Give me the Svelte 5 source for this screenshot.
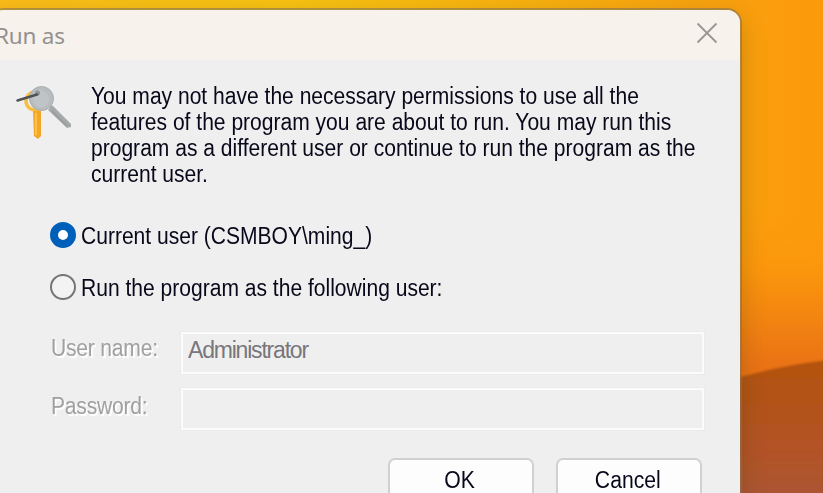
<script lang="ts">
  const message = [
    "You may not have the necessary permissions to use all the",
    "features of the program you are about to run. You may run this",
    "program as a different user or continue to run the program as the",
    "current user.",
  ];

  let runAs = $state("current");
  let userName = $state("Administrator");
  let password = $state("");
</script>

<div class="desktop">
  <svg class="wallpaper" viewBox="0 0 823 493" aria-hidden="true">
    <defs>
      <linearGradient id="sky" x1="0" y1="0" x2="1" y2="0">
        <stop offset="0" stop-color="#fabc18" />
        <stop offset="0.35" stop-color="#f8c312" />
        <stop offset="0.6" stop-color="#f8b40f" />
        <stop offset="0.85" stop-color="#f9a30f" />
        <stop offset="1" stop-color="#fc9a0b" />
      </linearGradient>
      <linearGradient id="glow" x1="0" y1="0" x2="0" y2="1">
        <stop offset="0.4" stop-color="#fd9d0b" stop-opacity="0" />
        <stop offset="0.55" stop-color="#fb960c" />
        <stop offset="0.74" stop-color="#ea7315" />
      </linearGradient>
      <linearGradient id="dune" x1="0" y1="0" x2="0" y2="1">
        <stop offset="0" stop-color="#b3520c" />
        <stop offset="0.6" stop-color="#b35327" />
        <stop offset="1" stop-color="#ab5635" />
      </linearGradient>
      <filter id="soft"><feGaussianBlur stdDeviation="1.3" /></filter>
    </defs>
    <rect width="823" height="493" fill="url(#sky)" />
    <rect width="823" height="493" fill="url(#glow)" />
    <path
      d="M700 388 L740 377 Q785 365 830 360 V505 H700 Z"
      fill="url(#dune)"
      filter="url(#soft)"
    />
  </svg>

  <div class="dialog">
    <header class="titlebar">
      <span class="title">Run as</span>
      <button class="close" aria-label="Close">
        <svg width="22" height="22" viewBox="0 0 22 22">
          <path d="M1.5 1.5 L20.5 20.5 M20.5 1.5 L1.5 20.5" />
        </svg>
      </button>
    </header>

    <div class="content">
      <div class="intro">
        <svg class="keys" width="56" height="58" viewBox="0 0 56 58">
          <circle cx="19" cy="15" r="9" fill="none" stroke="#f8bd3e" stroke-width="3.5" />
          <path d="M17 25 H25 V50 L22 53 L18 50 Z" fill="#f5a623" />
          <path d="M20 27 V49" stroke="#ffc04f" stroke-width="2" />
          <path d="M32 24 L36 19 L55 38 V41 L51 42 Z" fill="#a6a9aa" />
          <path d="M36 25 L51 40" stroke="#969a9b" stroke-width="1.5" />
          <circle cx="25.5" cy="12.5" r="12" fill="#b7bdbf" stroke="#a7acae" stroke-width="1" />
          <ellipse cx="25" cy="13" rx="8" ry="9" fill="#bfc5c7" />
          <circle cx="21.5" cy="7" r="2.5" fill="#8f9495" />
          <path d="M1.5 14.5 L21 8.5" stroke="#515354" stroke-width="2.5" stroke-linecap="round" />
        </svg>
        <p class="message">
          {#each message as line}
            <span class="line narrow">{line}</span>
          {/each}
        </p>
      </div>

      <label class="choice">
        <input type="radio" value="current" bind:group={runAs} />
        <span class="narrow">Current user (CSMBOY\ming_)</span>
      </label>
      <label class="choice">
        <input type="radio" value="other" bind:group={runAs} />
        <span class="narrow">Run the program as the following user:</span>
      </label>

      <div class="fields">
        <label class="field-label narrow" for="user">User name:</label>
        <input id="user" class="field" bind:value={userName} disabled={runAs === "current"} />
        <label class="field-label password narrow" for="pass">Password:</label>
        <input
          id="pass"
          class="field"
          type="password"
          bind:value={password}
          disabled={runAs === "current"}
        />
      </div>

      <div class="actions">
        <button class="btn"><span class="btn-text">OK</span></button>
        <button class="btn"><span class="btn-text">Cancel</span></button>
      </div>
    </div>
  </div>
</div>

<style>
  :global(body) {
    margin: 0;
    overflow: hidden;
  }

  .desktop {
    position: relative;
    width: 823px;
    height: 493px;
    overflow: hidden;
    font-family: "Liberation Sans", Arial, sans-serif;
    font-size: 23px;
    color: #08081a;
  }

  .wallpaper {
    position: absolute;
    inset: 0;
    width: 823px;
    height: 493px;
  }

  /* the window hangs over the left and bottom edges of the desktop */
  .dialog {
    position: absolute;
    left: -11px;
    top: 8px;
    width: 749px;
    height: 540px;
    border: 2px solid rgba(130, 115, 85, 0.6);
    border-radius: 15px;
    background: #efefef;
    background-clip: padding-box;
    box-shadow: 0 8px 24px rgba(70, 60, 0, 0.25);
    overflow: hidden;
  }

  .titlebar {
    display: flex;
    justify-content: space-between;
    height: 50px;
    padding: 0 20px 0 4px;
    background: #f7f2eb;
    box-sizing: border-box;
  }

  .title {
    font-family: "Noto Sans", "Open Sans", sans-serif;
    font-size: 22.5px;
    line-height: 51px;
    letter-spacing: -0.2px;
    color: #929190;
  }

  .close {
    display: block;
    width: 26px;
    height: 46px;
    padding: 0;
    border: none;
    background: none;
  }

  .close svg {
    display: block;
    margin: 0 auto;
    fill: none;
    stroke: #999691;
    stroke-width: 1.8;
  }

  .content {
    padding: 23px 36px 0 59px;
  }

  .intro {
    display: flex;
    height: 127px;
    margin-left: -34px;
  }

  .keys {
    flex: none;
    margin-top: 3px;
  }

  .message {
    margin: 0 0 0 19px;
  }

  .line {
    display: block;
    line-height: 26px;
  }

  /* dialog text is set tighter than the regular face */
  .narrow {
    transform: scaleX(0.915);
    transform-origin: left;
    white-space: pre;
  }

  .choice {
    display: flex;
    align-items: center;
    gap: 5px;
    height: 52px;
  }

  .choice input {
    appearance: none;
    flex: none;
    width: 26px;
    height: 26px;
    margin: 0 0 2px;
    border: 2px solid #757575;
    border-radius: 50%;
    background: #f3f3f3;
    box-sizing: border-box;
  }

  .choice input:checked {
    border: 8px solid #005fb8;
    background: #fff;
  }

  .fields {
    display: grid;
    grid-template-columns: 131px 523px;
    row-gap: 14px;
    margin-top: 18px;
  }

  .field-label {
    align-self: start;
    justify-self: start;
    padding-left: 1px;
    line-height: 33px;
    letter-spacing: -0.2px;
    color: #a0a0a0;
    text-shadow: 2px 2px 0 #fff;
  }

  .password {
    padding-top: 2px;
  }

  .field {
    width: 523px;
    height: 42px;
    padding: 0 5px 5px;
    border: 2px solid #fbfbfb;
    border-radius: 0;
    background: #efefef;
    box-sizing: border-box;
    font: inherit;
    letter-spacing: -1.2px;
    color: #77777c;
    outline: 1px solid #ebebeb;
  }

  .actions {
    display: flex;
    justify-content: flex-end;
    gap: 22px;
    margin-top: 28px;
    padding-right: 2px;
  }

  .btn {
    width: 146px;
    height: 46px;
    padding: 0 2px 2px 0;
    border: 2px solid #d0d0d0;
    border-radius: 7px;
    background: #fdfdfd;
    font: inherit;
    color: #08081a;
    box-sizing: border-box;
  }

  .btn-text {
    display: inline-block;
    transform: scaleX(0.92);
  }
</style>
